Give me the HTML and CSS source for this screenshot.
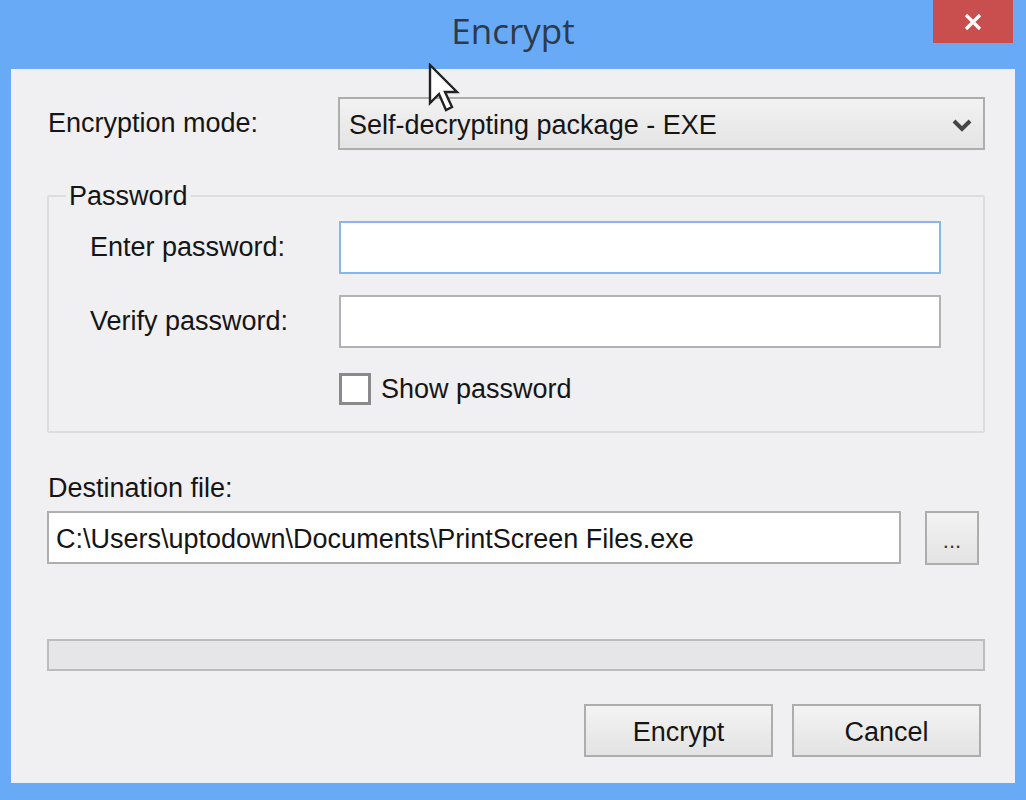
FILE: index.html
```html
<!DOCTYPE html>
<html lang="en">
<head>
    <meta charset="UTF-8">
    <title>Encrypt</title>
    <link rel="stylesheet" href="styles.css">
</head>
<body>
    <div class="window">
        <div class="titlebar">
            <span class="title">Encrypt</span>
            <div class="close">
                <svg width="22" height="20" viewBox="0 0 22 20">
                    <path d="M4 3 L18 17 M18 3 L4 17" stroke="#fff" stroke-width="3.2" fill="none"/>
                </svg>
            </div>
        </div>

        <div class="client">
            <div class="row mode">
                <label class="label">Encryption mode:</label>
                <div class="select">
                    <span>Self-decrypting package - EXE</span>
                    <svg width="22" height="16" viewBox="0 0 22 16">
                        <path d="M3 4 L11 12 L19 4" stroke="#454545" stroke-width="4" fill="none"/>
                    </svg>
                </div>
            </div>

            <fieldset class="group">
                <legend>Password</legend>
                <div class="prow">
                    <label class="plabel">Enter password:</label>
                    <div class="field focused"></div>
                </div>
                <div class="prow">
                    <label class="plabel">Verify password:</label>
                    <div class="field"></div>
                </div>
                <div class="check">
                    <span class="box"></span>
                    <span>Show password</span>
                </div>
            </fieldset>

            <div class="dest-label">Destination file:</div>
            <div class="dest">
                <div class="field path">C:\Users\uptodown\Documents\PrintScreen Files.exe</div>
                <div class="btn browse">...</div>
            </div>

            <div class="progress"></div>

            <div class="actions">
                <div class="btn action">Encrypt</div>
                <div class="btn action">Cancel</div>
            </div>
        </div>

        <svg class="cursor" width="32" height="52" viewBox="0 0 32 52">
            <path d="M2 2 L2 40 L11 31 L18 47 L24 44 L17 29 L29 29 Z" fill="#fff" stroke="#222" stroke-width="2.4" stroke-linejoin="miter"/>
        </svg>
    </div>
</body>
</html>
```

FILE: styles.css
```css
html, body {
    margin: 0;
    padding: 0;
}
body {
    width: 1026px;
    height: 800px;
    overflow: hidden;
    background: #68aaf5;
    font-family: 'Liberation Sans', Arial, sans-serif;
    font-size: 27px;
    color: #151515;
}
.window {
    position: relative;
    height: 800px;
}
.titlebar {
    position: relative;
    height: 69px;
    text-align: center;
}
.title {
    display: inline-block;
    padding-top: 13px;
    font-family: 'Open Sans', sans-serif;
    font-size: 35px;
    line-height: 35px;
    color: #2c3a4a;
}
.close {
    position: absolute;
    top: 0;
    right: 13px;
    width: 80px;
    height: 43px;
    background: #c94f4f;
    display: flex;
    align-items: center;
    justify-content: center;
}
.client {
    margin: 0 11px;
    height: 714px;
    box-sizing: border-box;
    padding: 28px 30px 0 36px;
    background: #f0eff1;
}
.row {
    display: flex;
    align-items: center;
}
.mode {
    height: 53px;
}
.label {
    width: 291px;
    padding-left: 1px;
    box-sizing: border-box;
}
.select {
    flex: 1;
    height: 53px;
    box-sizing: border-box;
    border: 2px solid #adadad;
    background: linear-gradient(#f2f2f2, #e4e4e4);
    display: flex;
    align-items: center;
    justify-content: space-between;
    padding: 3px 10px 0 9px;
}
.group {
    margin: 31px 0 0 0;
    padding: 10px 42px 26px 41px;
    border: 2px solid #dedcdf;
    border-radius: 2px;
}
.group legend {
    margin-left: -24px;
    padding: 0 3px;
    line-height: 30px;
}
.prow {
    display: flex;
    align-items: center;
    height: 53px;
    margin-bottom: 21px;
}
.plabel {
    width: 249px;
}
.field {
    flex: 1;
    height: 53px;
    box-sizing: border-box;
    background: #fff;
    border: 2px solid #b3b3b3;
}
.field.focused {
    border-color: #86b7e9;
}
.check {
    display: flex;
    align-items: center;
    margin: 25px 0 0 249px;
    height: 32px;
}
.box {
    width: 32px;
    height: 32px;
    box-sizing: border-box;
    border: 3px solid #8a8a8a;
    background: #fff;
    margin-right: 10px;
}
.dest-label {
    margin-top: 40px;
    line-height: 30px;
    padding-left: 1px;
}
.dest {
    display: flex;
    gap: 24px;
    margin-top: 8px;
    padding-right: 6px;
}
.path {
    display: flex;
    align-items: center;
    padding: 3px 0 0 7px;
    border-color: #aeaeae;
}
.btn {
    box-sizing: border-box;
    border: 2px solid #adadad;
    background: linear-gradient(#f3f3f3, #e3e3e3);
    display: flex;
    align-items: center;
    justify-content: center;
}
.browse {
    width: 54px;
    height: 54px;
    font-size: 22px;
    padding-top: 6px;
    color: #333;
}
.progress {
    margin-top: 74px;
    height: 32px;
    box-sizing: border-box;
    border: 2px solid #bcbcbc;
    background: #e6e5e8;
}
.actions {
    display: flex;
    justify-content: flex-end;
    gap: 19px;
    margin-top: 33px;
    padding-right: 4px;
}
.action {
    width: 189px;
    height: 53px;
    padding-top: 4px;
}
.cursor {
    position: absolute;
    left: 428px;
    top: 63px;
}
```
